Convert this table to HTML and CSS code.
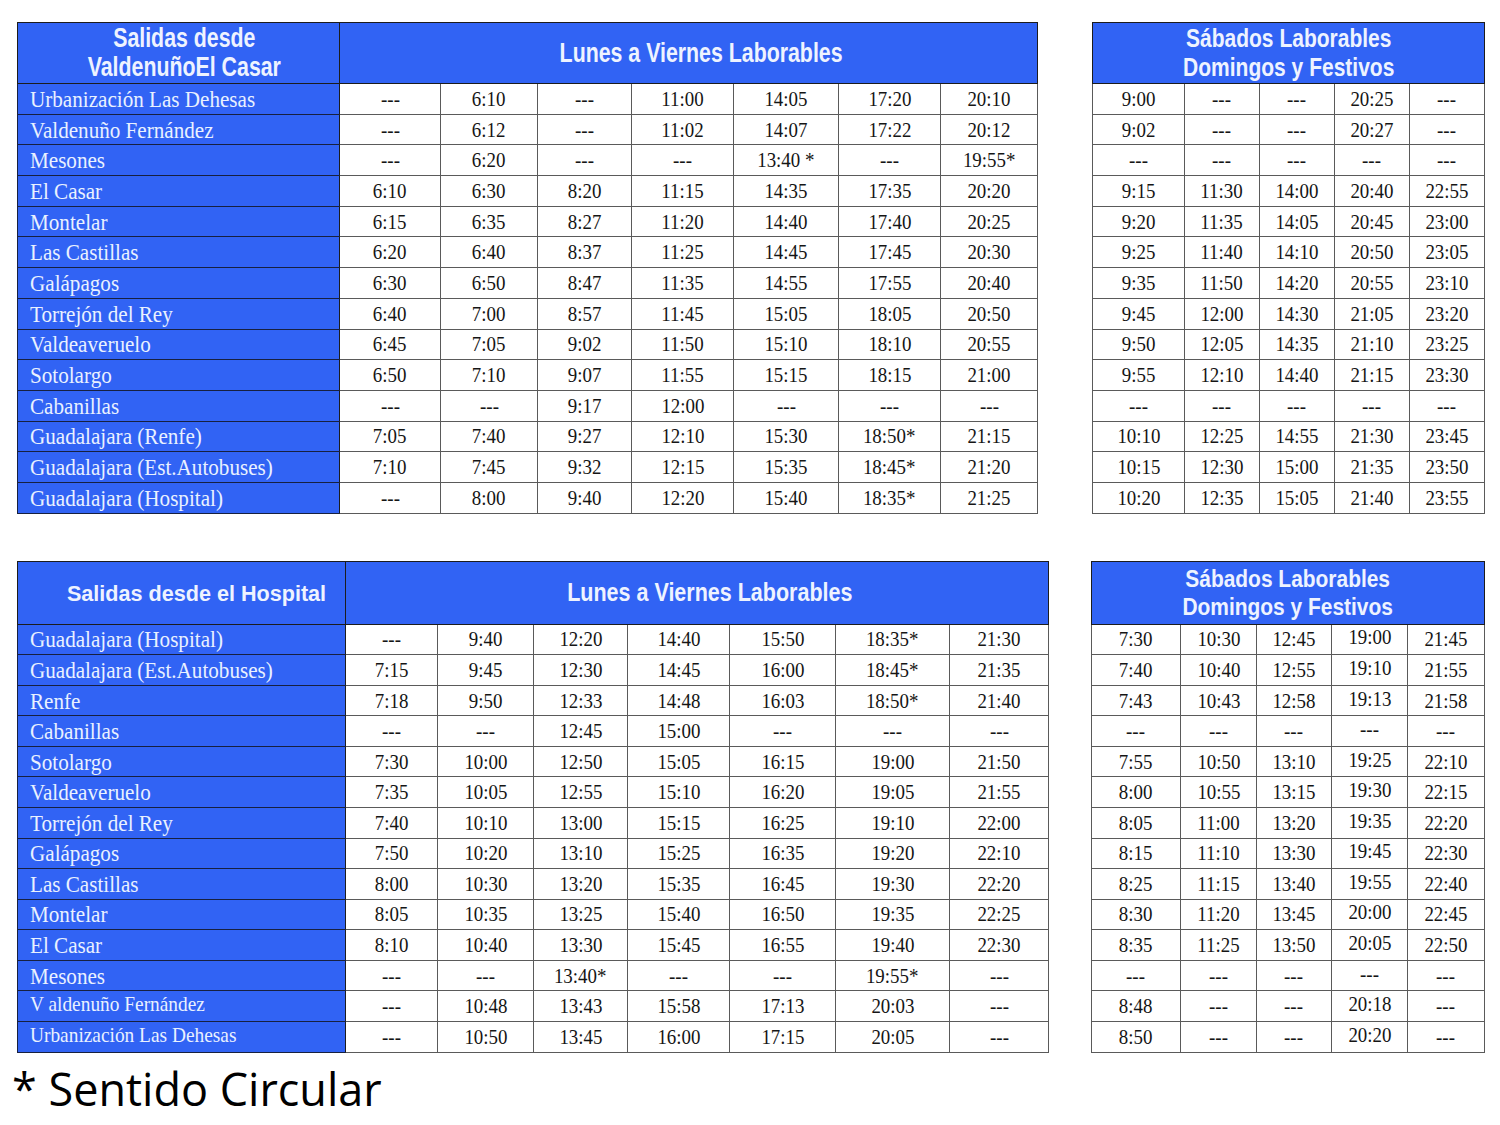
FILE: index.html
```html
<!DOCTYPE html>
<html lang="es">
<head>
<meta charset="utf-8">
<title>Horarios</title>
<link rel="stylesheet" href="styles.css">
</head>
<body>
<div class="page">
  <div class="section top">
    <table class="grid weekday">
      <colgroup>
        <col style="width:322px"><col style="width:101px"><col style="width:97px"><col style="width:94px"><col style="width:102px"><col style="width:105px"><col style="width:102px"><col style="width:97px">
      </colgroup>
      <tr class="head">
        <th class="origin"><span class="ht c79">Salidas desde<br>ValdenuñoEl Casar</span></th>
        <th colspan="7" class="days"><span class="ht c79">Lunes a Viernes Laborables</span></th>
      </tr>
      <tr><td class="stop"><span>Urbanización Las Dehesas</span></td><td><span>---</span></td><td><span>6:10</span></td><td><span>---</span></td><td><span>11:00</span></td><td><span>14:05</span></td><td><span>17:20</span></td><td><span>20:10</span></td></tr>
      <tr><td class="stop"><span>Valdenuño Fernández</span></td><td><span>---</span></td><td><span>6:12</span></td><td><span>---</span></td><td><span>11:02</span></td><td><span>14:07</span></td><td><span>17:22</span></td><td><span>20:12</span></td></tr>
      <tr><td class="stop"><span>Mesones</span></td><td><span>---</span></td><td><span>6:20</span></td><td><span>---</span></td><td><span>---</span></td><td><span>13:40 *</span></td><td><span>---</span></td><td><span>19:55*</span></td></tr>
      <tr><td class="stop"><span>El Casar</span></td><td><span>6:10</span></td><td><span>6:30</span></td><td><span>8:20</span></td><td><span>11:15</span></td><td><span>14:35</span></td><td><span>17:35</span></td><td><span>20:20</span></td></tr>
      <tr><td class="stop"><span>Montelar</span></td><td><span>6:15</span></td><td><span>6:35</span></td><td><span>8:27</span></td><td><span>11:20</span></td><td><span>14:40</span></td><td><span>17:40</span></td><td><span>20:25</span></td></tr>
      <tr><td class="stop"><span>Las Castillas</span></td><td><span>6:20</span></td><td><span>6:40</span></td><td><span>8:37</span></td><td><span>11:25</span></td><td><span>14:45</span></td><td><span>17:45</span></td><td><span>20:30</span></td></tr>
      <tr><td class="stop"><span>Galápagos</span></td><td><span>6:30</span></td><td><span>6:50</span></td><td><span>8:47</span></td><td><span>11:35</span></td><td><span>14:55</span></td><td><span>17:55</span></td><td><span>20:40</span></td></tr>
      <tr><td class="stop"><span>Torrejón del Rey</span></td><td><span>6:40</span></td><td><span>7:00</span></td><td><span>8:57</span></td><td><span>11:45</span></td><td><span>15:05</span></td><td><span>18:05</span></td><td><span>20:50</span></td></tr>
      <tr><td class="stop"><span>Valdeaveruelo</span></td><td><span>6:45</span></td><td><span>7:05</span></td><td><span>9:02</span></td><td><span>11:50</span></td><td><span>15:10</span></td><td><span>18:10</span></td><td><span>20:55</span></td></tr>
      <tr><td class="stop"><span>Sotolargo</span></td><td><span>6:50</span></td><td><span>7:10</span></td><td><span>9:07</span></td><td><span>11:55</span></td><td><span>15:15</span></td><td><span>18:15</span></td><td><span>21:00</span></td></tr>
      <tr><td class="stop"><span>Cabanillas</span></td><td><span>---</span></td><td><span>---</span></td><td><span>9:17</span></td><td><span>12:00</span></td><td><span>---</span></td><td><span>---</span></td><td><span>---</span></td></tr>
      <tr><td class="stop"><span>Guadalajara (Renfe)</span></td><td><span>7:05</span></td><td><span>7:40</span></td><td><span>9:27</span></td><td><span>12:10</span></td><td><span>15:30</span></td><td><span>18:50*</span></td><td><span>21:15</span></td></tr>
      <tr><td class="stop"><span>Guadalajara (Est.Autobuses)</span></td><td><span>7:10</span></td><td><span>7:45</span></td><td><span>9:32</span></td><td><span>12:15</span></td><td><span>15:35</span></td><td><span>18:45*</span></td><td><span>21:20</span></td></tr>
      <tr><td class="stop"><span>Guadalajara (Hospital)</span></td><td><span>---</span></td><td><span>8:00</span></td><td><span>9:40</span></td><td><span>12:20</span></td><td><span>15:40</span></td><td><span>18:35*</span></td><td><span>21:25</span></td></tr>
    </table>

    <table class="grid weekend">
      <colgroup>
        <col style="width:92px"><col style="width:75px"><col style="width:75px"><col style="width:75px"><col style="width:75px">
      </colgroup>
      <tr class="head">
        <th colspan="5"><span class="ht c85">Sábados Laborables<br>Domingos y Festivos</span></th>
      </tr>
      <tr><td><span>9:00</span></td><td><span>---</span></td><td><span>---</span></td><td><span>20:25</span></td><td><span>---</span></td></tr>
      <tr><td><span>9:02</span></td><td><span>---</span></td><td><span>---</span></td><td><span>20:27</span></td><td><span>---</span></td></tr>
      <tr><td><span>---</span></td><td><span>---</span></td><td><span>---</span></td><td><span>---</span></td><td><span>---</span></td></tr>
      <tr><td><span>9:15</span></td><td><span>11:30</span></td><td><span>14:00</span></td><td><span>20:40</span></td><td><span>22:55</span></td></tr>
      <tr><td><span>9:20</span></td><td><span>11:35</span></td><td><span>14:05</span></td><td><span>20:45</span></td><td><span>23:00</span></td></tr>
      <tr><td><span>9:25</span></td><td><span>11:40</span></td><td><span>14:10</span></td><td><span>20:50</span></td><td><span>23:05</span></td></tr>
      <tr><td><span>9:35</span></td><td><span>11:50</span></td><td><span>14:20</span></td><td><span>20:55</span></td><td><span>23:10</span></td></tr>
      <tr><td><span>9:45</span></td><td><span>12:00</span></td><td><span>14:30</span></td><td><span>21:05</span></td><td><span>23:20</span></td></tr>
      <tr><td><span>9:50</span></td><td><span>12:05</span></td><td><span>14:35</span></td><td><span>21:10</span></td><td><span>23:25</span></td></tr>
      <tr><td><span>9:55</span></td><td><span>12:10</span></td><td><span>14:40</span></td><td><span>21:15</span></td><td><span>23:30</span></td></tr>
      <tr><td><span>---</span></td><td><span>---</span></td><td><span>---</span></td><td><span>---</span></td><td><span>---</span></td></tr>
      <tr><td><span>10:10</span></td><td><span>12:25</span></td><td><span>14:55</span></td><td><span>21:30</span></td><td><span>23:45</span></td></tr>
      <tr><td><span>10:15</span></td><td><span>12:30</span></td><td><span>15:00</span></td><td><span>21:35</span></td><td><span>23:50</span></td></tr>
      <tr><td><span>10:20</span></td><td><span>12:35</span></td><td><span>15:05</span></td><td><span>21:40</span></td><td><span>23:55</span></td></tr>
    </table>
  </div>

  <div class="section bottom">
    <table class="grid weekday">
      <colgroup>
        <col style="width:328px"><col style="width:92px"><col style="width:96px"><col style="width:94px"><col style="width:102px"><col style="width:106px"><col style="width:114px"><col style="width:99px">
      </colgroup>
      <tr class="head">
        <th class="origin hosp"><span class="ht">Salidas desde el Hospital</span></th>
        <th colspan="7" class="days"><span class="ht c86">Lunes a Viernes Laborables</span></th>
      </tr>
      <tr><td class="stop"><span>Guadalajara (Hospital)</span></td><td><span>---</span></td><td><span>9:40</span></td><td><span>12:20</span></td><td><span>14:40</span></td><td><span>15:50</span></td><td><span>18:35*</span></td><td><span>21:30</span></td></tr>
      <tr><td class="stop"><span>Guadalajara (Est.Autobuses)</span></td><td><span>7:15</span></td><td><span>9:45</span></td><td><span>12:30</span></td><td><span>14:45</span></td><td><span>16:00</span></td><td><span>18:45*</span></td><td><span>21:35</span></td></tr>
      <tr><td class="stop"><span>Renfe</span></td><td><span>7:18</span></td><td><span>9:50</span></td><td><span>12:33</span></td><td><span>14:48</span></td><td><span>16:03</span></td><td><span>18:50*</span></td><td><span>21:40</span></td></tr>
      <tr><td class="stop"><span>Cabanillas</span></td><td><span>---</span></td><td><span>---</span></td><td><span>12:45</span></td><td><span>15:00</span></td><td><span>---</span></td><td><span>---</span></td><td><span>---</span></td></tr>
      <tr><td class="stop"><span>Sotolargo</span></td><td><span>7:30</span></td><td><span>10:00</span></td><td><span>12:50</span></td><td><span>15:05</span></td><td><span>16:15</span></td><td><span>19:00</span></td><td><span>21:50</span></td></tr>
      <tr><td class="stop"><span>Valdeaveruelo</span></td><td><span>7:35</span></td><td><span>10:05</span></td><td><span>12:55</span></td><td><span>15:10</span></td><td><span>16:20</span></td><td><span>19:05</span></td><td><span>21:55</span></td></tr>
      <tr><td class="stop"><span>Torrejón del Rey</span></td><td><span>7:40</span></td><td><span>10:10</span></td><td><span>13:00</span></td><td><span>15:15</span></td><td><span>16:25</span></td><td><span>19:10</span></td><td><span>22:00</span></td></tr>
      <tr><td class="stop"><span>Galápagos</span></td><td><span>7:50</span></td><td><span>10:20</span></td><td><span>13:10</span></td><td><span>15:25</span></td><td><span>16:35</span></td><td><span>19:20</span></td><td><span>22:10</span></td></tr>
      <tr><td class="stop"><span>Las Castillas</span></td><td><span>8:00</span></td><td><span>10:30</span></td><td><span>13:20</span></td><td><span>15:35</span></td><td><span>16:45</span></td><td><span>19:30</span></td><td><span>22:20</span></td></tr>
      <tr><td class="stop"><span>Montelar</span></td><td><span>8:05</span></td><td><span>10:35</span></td><td><span>13:25</span></td><td><span>15:40</span></td><td><span>16:50</span></td><td><span>19:35</span></td><td><span>22:25</span></td></tr>
      <tr><td class="stop"><span>El Casar</span></td><td><span>8:10</span></td><td><span>10:40</span></td><td><span>13:30</span></td><td><span>15:45</span></td><td><span>16:55</span></td><td><span>19:40</span></td><td><span>22:30</span></td></tr>
      <tr><td class="stop"><span>Mesones</span></td><td><span>---</span></td><td><span>---</span></td><td><span>13:40*</span></td><td><span>---</span></td><td><span>---</span></td><td><span>19:55*</span></td><td><span>---</span></td></tr>
      <tr><td class="stop small"><span>V aldenuño Fernández</span></td><td><span>---</span></td><td><span>10:48</span></td><td><span>13:43</span></td><td><span>15:58</span></td><td><span>17:13</span></td><td><span>20:03</span></td><td><span>---</span></td></tr>
      <tr><td class="stop small"><span>Urbanización Las Dehesas</span></td><td><span>---</span></td><td><span>10:50</span></td><td><span>13:45</span></td><td><span>16:00</span></td><td><span>17:15</span></td><td><span>20:05</span></td><td><span>---</span></td></tr>
    </table>

    <table class="grid weekend">
      <colgroup>
        <col style="width:89px"><col style="width:76px"><col style="width:75px"><col style="width:76px"><col style="width:77px">
      </colgroup>
      <tr class="head">
        <th colspan="5"><span class="ht c91">Sábados Laborables<br>Domingos y Festivos</span></th>
      </tr>
      <tr><td><span>7:30</span></td><td><span>10:30</span></td><td><span>12:45</span></td><td class="up"><span>19:00</span></td><td><span>21:45</span></td></tr>
      <tr><td><span>7:40</span></td><td><span>10:40</span></td><td><span>12:55</span></td><td class="up"><span>19:10</span></td><td><span>21:55</span></td></tr>
      <tr><td><span>7:43</span></td><td><span>10:43</span></td><td><span>12:58</span></td><td class="up"><span>19:13</span></td><td><span>21:58</span></td></tr>
      <tr><td><span>---</span></td><td><span>---</span></td><td><span>---</span></td><td class="up"><span>---</span></td><td><span>---</span></td></tr>
      <tr><td><span>7:55</span></td><td><span>10:50</span></td><td><span>13:10</span></td><td class="up"><span>19:25</span></td><td><span>22:10</span></td></tr>
      <tr><td><span>8:00</span></td><td><span>10:55</span></td><td><span>13:15</span></td><td class="up"><span>19:30</span></td><td><span>22:15</span></td></tr>
      <tr><td><span>8:05</span></td><td><span>11:00</span></td><td><span>13:20</span></td><td class="up"><span>19:35</span></td><td><span>22:20</span></td></tr>
      <tr><td><span>8:15</span></td><td><span>11:10</span></td><td><span>13:30</span></td><td class="up"><span>19:45</span></td><td><span>22:30</span></td></tr>
      <tr><td><span>8:25</span></td><td><span>11:15</span></td><td><span>13:40</span></td><td class="up"><span>19:55</span></td><td><span>22:40</span></td></tr>
      <tr><td><span>8:30</span></td><td><span>11:20</span></td><td><span>13:45</span></td><td class="up"><span>20:00</span></td><td><span>22:45</span></td></tr>
      <tr><td><span>8:35</span></td><td><span>11:25</span></td><td><span>13:50</span></td><td class="up"><span>20:05</span></td><td><span>22:50</span></td></tr>
      <tr><td><span>---</span></td><td><span>---</span></td><td><span>---</span></td><td class="up"><span>---</span></td><td><span>---</span></td></tr>
      <tr><td><span>8:48</span></td><td><span>---</span></td><td><span>---</span></td><td class="up"><span>20:18</span></td><td><span>---</span></td></tr>
      <tr><td><span>8:50</span></td><td><span>---</span></td><td><span>---</span></td><td class="up"><span>20:20</span></td><td><span>---</span></td></tr>
    </table>
  </div>

  <p class="note">* Sentido Circular</p>
</div>
</body>
</html>
```

FILE: styles.css
```css
html, body {
  margin: 0;
  padding: 0;
  background: #ffffff;
}

.page {
  padding: 22px 0 0 17px;
  width: 1468px;
}

.section {
  display: flex;
  justify-content: space-between;
  align-items: flex-start;
}

.section + .section {
  margin-top: 47px;
}

.grid {
  border-collapse: collapse;
  table-layout: fixed;
  border: 1px solid #1c1c1c;
}

.grid.weekend {
  width: 392px;
}

.top .grid.weekday {
  width: 1020px;
}

.bottom .grid.weekday {
  width: 1031px;
}

.grid th {
  background: #3163f4;
  color: #eef3ff;
  font-family: "Liberation Sans", Arial, sans-serif;
  font-weight: bold;
  font-size: 27px;
  line-height: 29px;
  text-align: center;
  vertical-align: middle;
  padding: 0;
  border: 1px solid #1c1c1c;
}

.top .grid tr {
  height: 30.7px;
}

.bottom .grid tr {
  height: 30.57px;
}

.top .grid tr.head {
  height: 61px;
}

.bottom .grid tr.head {
  height: 63px;
}

.ht {
  display: inline-block;
  transform-origin: center center;
}

.c79 {
  transform: scaleX(0.79);
}

.c85 {
  font-size: 25px;
  transform: scaleX(0.84);
}

.c86 {
  font-size: 25px;
  transform: scaleX(0.86);
}

.c91 {
  font-size: 23px;
  line-height: 28px;
  transform: scaleX(0.91);
}

.grid th.origin {
  padding-left: 12px;
}

.grid th.origin.hosp {
  padding-left: 30px;
}

.origin.hosp .ht {
  font-size: 21.6px;
}

.grid th.days {
  padding-left: 26px;
}

.grid td {
  padding: 0;
  text-align: center;
  vertical-align: middle;
  font-family: "Liberation Serif", "Times New Roman", serif;
  font-size: 21px;
  line-height: 24px;
  color: #151515;
  border: 1px solid #5a5a5a;
  white-space: nowrap;
  overflow: hidden;
}

.grid td span {
  display: inline-block;
  transform: scaleX(0.9);
}

.grid td.up span {
  position: relative;
  top: -2px;
}

.grid td.stop {
  background: #3163f4;
  color: #e9f1ff;
  text-align: left;
  padding-left: 12px;
  font-size: 24px;
  border-color: #17203f;
  border-right: 1px solid #1c1c1c;
}

.grid td.stop span {
  transform: scaleX(0.88);
  transform-origin: left center;
}

.grid td.stop.small {
  font-size: 22px;
}

.grid td.stop.small span {
  transform: scaleX(0.88);
  position: relative;
  top: -2px;
}

.note {
  margin: 9px 0 0 -5px;
  font-family: "Open Sans", "Noto Sans", sans-serif;
  font-size: 45px;
  line-height: 54px;
  color: #000;
}
```
